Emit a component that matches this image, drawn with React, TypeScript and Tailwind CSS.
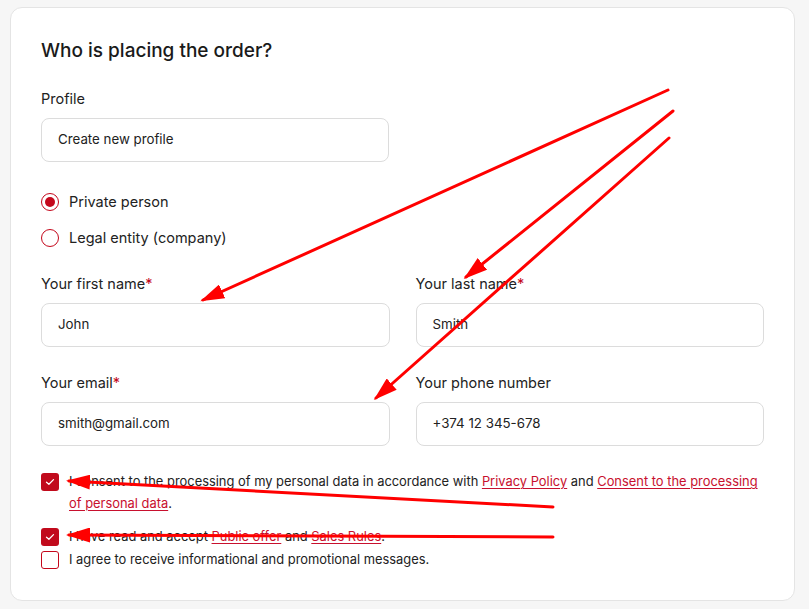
import React from "react";

function Field({ label, required, value }: { label: string; required?: boolean; value: string }) {
  return (
    <div className="flex flex-col">
      <div className="text-[14.5px] leading-[22px] text-[#222]">
        {label}
        {required && <span className="text-[#c4071b]">*</span>}
      </div>
      <div className="mt-[8px] h-[44px] rounded-[8px] border border-[#dcdcdc] bg-white px-[16px] flex items-center text-[13.3px] text-[#222]">
        {value}
      </div>
    </div>
  );
}

function Radio({ checked, label }: { checked?: boolean; label: string }) {
  return (
    <div className="flex items-center h-[24px]">
      <div className="w-[18px] h-[18px] rounded-full border-[1.5px] border-[#c4071b] flex items-center justify-center">
        {checked && <div className="w-[10px] h-[10px] rounded-full bg-[#c4071b]" />}
      </div>
      <span className="ml-[10px] text-[14.5px] text-[#222]">{label}</span>
    </div>
  );
}

function Box({ checked }: { checked?: boolean }) {
  return checked ? (
    <div className="w-[18px] h-[18px] shrink-0 rounded-[3px] bg-[#c10a1c] flex items-center justify-center">
      <svg width="10" height="8" viewBox="0 0 10 8" fill="none">
        <path d="M1.5 4.2 L3.9 6.3 L8.5 1.6" stroke="white" strokeWidth="1.3" strokeLinecap="round" strokeLinejoin="round" />
      </svg>
    </div>
  ) : (
    <div className="w-[18px] h-[18px] shrink-0 rounded-[3px] border border-[#c4071b] bg-white" />
  );
}

function A({ children }: { children: React.ReactNode }) {
  return <span className="text-[#c8102e] underline underline-offset-2 decoration-1">{children}</span>;
}

export default function App() {
  return (
    <div
      className="relative w-[809px] h-[609px] overflow-hidden bg-[#f6f6f6] pt-[7px] pl-[10px]"
      style={{ fontFamily: "Inter, 'Noto Sans', sans-serif" }}
    >
      <div className="w-[785px] rounded-[12px] border border-[#e4e4e4] bg-white px-[30px] pt-[29px] pb-[29px]">
        <h2 className="text-[19px] leading-[28px] font-medium text-[#1a1a1a]">Who is placing the order?</h2>

        <div className="mt-[23px] w-[348px]">
          <Field label="Profile" value="Create new profile" />
        </div>

        <div className="mt-[28px] flex flex-col gap-[12px]">
          <Radio checked label="Private person" />
          <Radio label="Legal entity (company)" />
        </div>

        <div className="mt-[23px] grid grid-cols-2 gap-x-[26px] gap-y-[25px]">
          <Field label="Your first name" required value="John" />
          <Field label="Your last name" required value="Smith" />
          <Field label="Your email" required value="smith@gmail.com" />
          <Field label="Your phone number" value="+374 12 345-678" />
        </div>

        <div className="mt-[25px] flex flex-col text-[12.9px] leading-[22px] text-[#222]">
          <div className="flex items-start">
            <div className="pt-[2px]"><Box checked /></div>
            <p className="ml-[10px]">
              I consent to the processing of my personal data in accordance with <A>Privacy Policy</A> and{" "}
              <A>Consent to the processing of personal data</A>.
            </p>
          </div>
          <div className="mt-[11px] flex items-center">
            <Box checked />
            <p className="ml-[10px]">
              I have read and accept <A>Public offer</A> and <A>Sales Rules</A>.
            </p>
          </div>
          <div className="mt-[1px] flex items-center">
            <Box />
            <p className="ml-[10px]">I agree to receive informational and promotional messages.</p>
          </div>
        </div>
      </div>

      <svg className="absolute inset-0 pointer-events-none" width="809" height="609" viewBox="0 0 809 609">
        <defs>
          <marker id="ah" markerWidth="8" markerHeight="5" refX="7" refY="2.5" orient="auto" markerUnits="strokeWidth">
            <path d="M0 0 L8 2.5 L0 5 Z" fill="#ff0000" />
          </marker>
        </defs>
        <g stroke="#ff0000" strokeWidth="3" strokeLinecap="round" fill="none">
          <line x1="668" y1="90" x2="203" y2="300" markerEnd="url(#ah)" />
          <line x1="673" y1="111" x2="466" y2="277" markerEnd="url(#ah)" />
          <line x1="669" y1="138" x2="376" y2="398" markerEnd="url(#ah)" />
          <line x1="553" y1="507" x2="69" y2="481" markerEnd="url(#ah)" />
          <line x1="553" y1="537" x2="69" y2="535" markerEnd="url(#ah)" />
        </g>
      </svg>
    </div>
  );
}
